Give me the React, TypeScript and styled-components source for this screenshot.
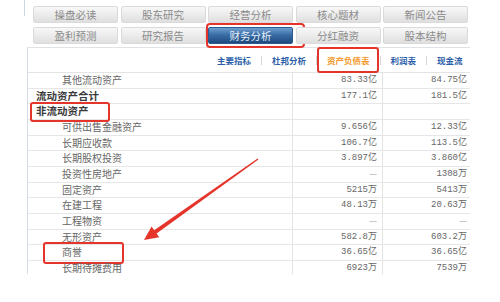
import React from "react";
import styled, { createGlobalStyle } from "styled-components";

const GlobalStyle = createGlobalStyle`
  html, body { margin: 0; padding: 0; background: #ffffff; }
  body { font-family: "Noto Sans CJK SC", "Noto Sans", sans-serif; }
  * { box-sizing: border-box; }
`;

const RED = "#e5352b";

const Page = styled.div`
  position: relative;
  width: 500px;
  height: 302px;
  background: #fff;
  overflow: hidden;
`;

const Container = styled.div`
  margin-left: 24px;
  width: 446px;
  height: 274px;
  overflow: hidden;
`;

const TabArea = styled.div`
  padding: 6px 0 0 9px;
  background: linear-gradient(#c9d6e3, #c9d6e3) no-repeat 0 0 / 1px 16px;
`;

const TabGrid = styled.div`
  display: grid;
  grid-template-columns: repeat(5, 85px);
  column-gap: 2.5px;
  row-gap: 4px;
`;

const Tab = styled.div<{ $active?: boolean; $marked?: boolean }>`
  position: relative;
  height: 17px;
  line-height: 16px;
  text-align: center;
  font-size: 10.5px;
  border-radius: 2px;
  color: ${(p) => (p.$active ? "#e8f0fa" : "#8a8a8a")};
  background: ${(p) =>
    p.$active
      ? "linear-gradient(#6f9fd0, #3a6ea6 45%, #1e4a7e)"
      : "linear-gradient(#f8f8f8, #e9e9e9 60%, #dfdfdf)"};
  border: 1px solid ${(p) => (p.$active ? "#2b5a8e" : "#dadada")};
  ${(p) =>
    p.$marked
      ? `&::after {
          content: "";
          position: absolute;
          left: -3px; right: -13px; top: -5px; bottom: -5px;
          border: 2px solid ${RED};
          border-radius: 4px;
        }`
      : ""}
`;

const Panel = styled.div`
  margin: 3px 0 0 3px;
  border-left: 1px solid #d5dbe3;
  border-top: 1px solid #dfe3e8;
`;

const SubHeader = styled.div`
  height: 25px;
  display: flex;
  align-items: center;
  padding-left: 189px;
  white-space: nowrap;
  border-bottom: 1px solid #e4e4e4;
`;

const NavLink = styled.span<{ $current?: boolean; $marked?: boolean }>`
  position: relative;
  flex: none;
  font-size: 8.5px;
  line-height: 12px;
  font-weight: bold;
  color: ${(p) => (p.$current ? "#f39a2b" : "#2b5ea8")};
  ${(p) =>
    p.$marked
      ? `&::after {
          content: "";
          position: absolute;
          left: -10px; right: -9px; top: -7px; bottom: -7px;
          border: 2px solid ${RED};
          border-radius: 3px;
        }`
      : ""}
`;

const Sep = styled.span`
  flex: none;
  width: 1px;
  height: 9px;
  margin: 0 10px;
  background: #d6d6d6;
`;

const Row = styled.div`
  display: grid;
  grid-template-columns: 265px 90px 90px;
  height: 15.67px;
  border-bottom: 1px solid #e6e6e6;
`;

const LabelCell = styled.div<{ $bold?: boolean }>`
  padding-left: ${(p) => (p.$bold ? "8px" : "34px")};
  border-right: 1px solid #e3e3e3;
  white-space: nowrap;
  font-size: ${(p) => (p.$bold ? "10.5px" : "10px")};
  font-weight: ${(p) => (p.$bold ? "bold" : "normal")};
  color: ${(p) => (p.$bold ? "#3a3a3a" : "#666")};
  line-height: 14.67px;
`;

const Label = styled.span<{ $box?: string }>`
  position: relative;
  display: inline-block;
  ${(p) =>
    p.$box
      ? `&::after {
          content: "";
          position: absolute;
          inset: ${p.$box};
          border: 2px solid ${RED};
          border-radius: 3px;
        }`
      : ""}
`;

const ValueCell = styled.div<{ $last?: boolean; $dash?: boolean }>`
  text-align: right;
  padding-right: ${(p) => (p.$last ? "6px" : "5px")};
  border-right: ${(p) => (p.$last ? "none" : "1px solid #e3e3e3")};
  font-family: ${(p) =>
    p.$dash
      ? '"Noto Sans CJK SC", sans-serif'
      : '"Liberation Mono", "Noto Sans CJK SC", monospace'};
  font-size: 9px;
  line-height: 14.67px;
  color: ${(p) => (p.$dash ? "#aaa" : "#666")};
  white-space: nowrap;
`;

const Overlay = styled.svg`
  position: absolute;
  left: 0;
  top: 0;
  pointer-events: none;
`;

type RowData = { label: string; a: string; b: string; bold?: boolean; box?: string };

const rows: RowData[] = [
  { label: "其他流动资产", a: "83.33亿", b: "84.75亿" },
  { label: "流动资产合计", a: "177.1亿", b: "181.5亿", bold: true },
  { label: "非流动资产", a: "", b: "", bold: true, box: "-2px -21px -3px -6px" },
  { label: "可供出售金融资产", a: "9.656亿", b: "12.33亿" },
  { label: "长期应收款", a: "106.7亿", b: "113.5亿" },
  { label: "长期股权投资", a: "3.897亿", b: "3.860亿" },
  { label: "投资性房地产", a: "—", b: "1308万" },
  { label: "固定资产", a: "5215万", b: "5413万" },
  { label: "在建工程", a: "48.13万", b: "20.63万" },
  { label: "工程物资", a: "—", b: "—" },
  { label: "无形资产", a: "582.8万", b: "603.2万" },
  { label: "商誉", a: "36.65亿", b: "36.65亿", box: "-3px -42px -4px -19px" },
  { label: "长期待摊费用", a: "6923万", b: "7539万" },
];

const tabs = [
  "操盘必读", "股东研究", "经营分析", "核心题材", "新闻公告",
  "盈利预测", "研究报告", "财务分析", "分红融资", "股本结构",
];

const links = ["主要指标", "杜邦分析", "资产负债表", "利润表", "现金流"];

export default function App() {
  return (
    <Page>
      <GlobalStyle />
      <Container>
        <TabArea>
          <TabGrid>
            {tabs.map((t) => (
              <Tab key={t} $active={t === "财务分析"} $marked={t === "财务分析"}>
                {t}
              </Tab>
            ))}
          </TabGrid>
        </TabArea>
        <Panel>
          <SubHeader>
            {links.map((l, i) => (
              <React.Fragment key={l}>
                {i > 0 && <Sep />}
                <NavLink $current={l === "资产负债表"} $marked={l === "资产负债表"}>
                  {l}
                </NavLink>
              </React.Fragment>
            ))}
          </SubHeader>
          {rows.map((r) => (
            <Row key={r.label}>
              <LabelCell $bold={r.bold}>
                <Label $box={r.box}>{r.label}</Label>
              </LabelCell>
              <ValueCell $dash={r.a === "—"}>{r.a}</ValueCell>
              <ValueCell $last $dash={r.b === "—"}>{r.b}</ValueCell>
            </Row>
          ))}
        </Panel>
      </Container>
      <Overlay width="500" height="302" viewBox="0 0 500 302">
        <polygon
          points="258.4,159.6 156.6,233.5 159.2,237.2 144,240 151.6,226.6 154.2,230.3 257.6,158.4"
          fill={RED}
        />
      </Overlay>
    </Page>
  );
}
